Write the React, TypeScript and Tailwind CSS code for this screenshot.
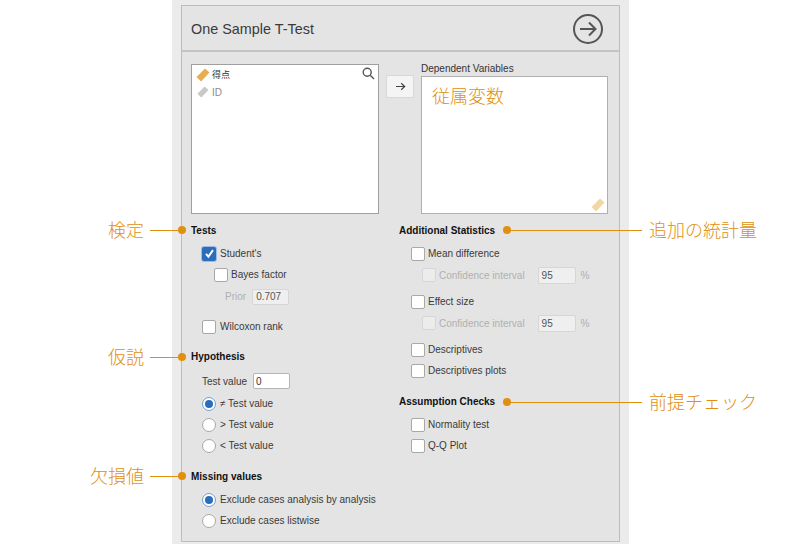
import React from 'react';

const SANS = "font-['Liberation_Sans',sans-serif]";
const CJK = "font-['Noto_Sans_CJK_JP','Liberation_Sans',sans-serif]";

const Box = ({ checked, disabled }: { checked?: boolean; disabled?: boolean }) => {
  if (checked) {
    return (
      <span className="flex h-[14px] w-[14px] shrink-0 items-center justify-center rounded-[2px] bg-[#2b6cbb] shadow-[0_0_0_1px_#9dbde3]">
        <svg width="11" height="11" viewBox="0 0 11 11" fill="none">
          <path d="M2 5.8 L4.4 8.6 L9 2.2" stroke="#fff" strokeWidth="2" />
        </svg>
      </span>
    );
  }
  return (
    <span
      className={
        disabled
          ? 'h-[14px] w-[14px] shrink-0 rounded-[2px] border border-[#d6d6d6] bg-[#ececec]'
          : 'h-[14px] w-[14px] shrink-0 rounded-[2px] border border-[#a8a8a8] bg-white'
      }
    />
  );
};

const Radio = ({ checked }: { checked?: boolean }) =>
  checked ? (
    <span className="flex h-[14px] w-[14px] shrink-0 items-center justify-center rounded-full border border-[#6d9fdc] bg-white">
      <span className="h-[8px] w-[8px] rounded-full bg-[#2b6cbb]" />
    </span>
  ) : (
    <span className="h-[14px] w-[14px] shrink-0 rounded-full border border-[#a8a8a8] bg-white" />
  );

const Row = ({ children, className = '' }: { children: React.ReactNode; className?: string }) => (
  <div className={`flex h-[21px] items-center gap-[3px] text-[10px] text-[#3a3a3a] ${className}`}>{children}</div>
);

const Heading = ({ children, className = '' }: { children: React.ReactNode; className?: string }) => (
  <div className={`flex h-[16px] items-center text-[10px] font-bold text-[#111] ${className}`}>{children}</div>
);

const ConfidenceRow = () => (
  <Row className="ml-[11px] h-[22px] text-[#b0b0b0]">
    <Box disabled />
    <span>Confidence interval</span>
    <span className="ml-[10px] flex h-[17px] w-[38px] items-center rounded-[2px] border border-[#d6d6d6] bg-[#efefef] pl-[3px] text-[#555]">
      95
    </span>
    <span className="ml-[2px]">%</span>
  </Row>
);

const Tag = ({ color, className = '' }: { color: string; className?: string }) => (
  <svg width="14" height="14" viewBox="0 0 14 14" className={`shrink-0 ${className}`}>
    <path d="M0.5 9 L9 0.5 L13.5 4.5 L5 13.5 Z" fill={color} />
  </svg>
);

const Note = ({ text, dotX, lineX, lineW, y, textX }: { text: string; dotX: number; lineX: number; lineW: number; y: number; textX: number }) => (
  <>
    <span className="absolute h-[8px] w-[8px] rounded-full bg-[#e0900f]" style={{ left: dotX, top: y - 4 }} />
    <span className="absolute h-px bg-[#e0900f]" style={{ left: lineX, top: y, width: lineW }} />
    <span
      className={`absolute whitespace-nowrap text-[18px] font-light leading-[24px] text-[#df9010] ${CJK}`}
      style={{ left: textX, top: y - 13 }}
    >
      {text}
    </span>
  </>
);

export default function App() {
  return (
    <div className={`relative h-[544px] w-[800px] overflow-hidden bg-white ${SANS}`}>
      <div className="ml-[172px] h-[544px] w-[457px] bg-[#ebebeb] pl-[9px] pr-[9px] pt-[5px]">
        <div className="h-[537px] w-[439px] border border-[#bdbdbd] bg-[#e4e4e4]">
          <div className="flex h-[46px] items-center justify-between border-b-2 border-[#c4c4c4] pl-[9px] pr-[15px]">
            <span className="mt-[4px] text-[14.4px] text-[#3a3a3a]">One Sample T-Test</span>
            <svg className="mt-[2px]" width="32" height="32" viewBox="0 0 32 32" fill="none" stroke="#555" strokeWidth="2">
              <circle cx="16" cy="16" r="14" />
              <path d="M8 16 H23 M17 9.5 L23.5 16 L17 22.5" />
            </svg>
          </div>

          <div className="flex pl-[9px] pt-[11px]">
            <div className="relative mt-[1px] h-[150px] w-[188px] border border-[#a0a0a0] bg-white">
              <div className="flex h-[17px] items-center gap-[2px] pl-[4px] pt-[2px] text-[10px] text-[#333]">
                <Tag color="#e9ad4f" />
                <span className={`${CJK} text-[9px]`}>得点</span>
              </div>
              <div className="flex h-[18px] items-center gap-[2px] pl-[4px] pt-[2px] text-[10px] text-[#8a8a8a]">
                <Tag color="#c8c8c8" className="scale-[0.85]" />
                <span>ID</span>
              </div>
              <svg className="absolute right-[3px] top-[2px]" width="13" height="13" viewBox="0 0 13 13" fill="none" stroke="#555" strokeWidth="1.4">
                <circle cx="5.2" cy="5.2" r="4" />
                <path d="M8.2 8.2 L12 12" />
              </svg>
            </div>
            <div className="ml-[7px] mt-[12px] flex h-[23px] w-[28px] items-center justify-center rounded-[2px] border border-[#d8d8d8] bg-[#f4f4f4]">
              <svg width="11" height="9" viewBox="0 0 11 9" fill="none" stroke="#444" strokeWidth="1.2">
                <path d="M1 4.5 H9.5 M6.2 1.2 L9.7 4.5 L6.2 7.8" />
              </svg>
            </div>
            <div className="ml-[7px] w-[187px]">
              <div className="-mt-[2px] flex h-[14px] items-center text-[10px] text-[#333]">Dependent Variables</div>
              <div className="relative mt-[1px] h-[138px] border border-[#b0b0b0] bg-white">
                <div className={`pl-[10px] pt-[6px] text-[18px] font-light leading-[24px] text-[#df9010] ${CJK}`}>従属変数</div>
                <Tag color="#f1d6a8" className="absolute bottom-[1px] right-[2px]" />
              </div>
            </div>
          </div>

          <div className="mt-[8px] flex pl-[9px]">
            <div className="w-[208px]">
              <Heading>Tests</Heading>
              <div className="mt-[5px] pl-[11px]">
                <Row><Box checked /><span className="ml-[1px]">Student's</span></Row>
                <Row className="ml-[12px]"><Box /><span>Bayes factor</span></Row>
                <Row className="ml-[23px] h-[23px] text-[#b0b0b0]">
                  Prior
                  <span className="ml-[3px] flex h-[16px] w-[37px] items-center rounded-[2px] border border-[#d6d6d6] bg-[#efefef] pl-[3px] text-[#555]">
                    0.707
                  </span>
                </Row>
                <Row className="mt-[8px]"><Box /><span className="ml-[1px]">Wilcoxon rank</span></Row>
              </div>
              <Heading className="mt-[11px]">Hypothesis</Heading>
              <div className="mt-[5px] pl-[11px]">
                <Row className="h-[24px]">
                  Test value
                  <span className="ml-[3px] flex h-[16px] w-[37px] items-center rounded-[2px] border border-[#b5b5b5] bg-white pl-[2px] text-[#333]">
                    0
                  </span>
                </Row>
                <Row><Radio checked /><span className="ml-[1px]">≠ Test value</span></Row>
                <Row><Radio /><span className="ml-[1px]">&gt; Test value</span></Row>
                <Row><Radio /><span className="ml-[1px]">&lt; Test value</span></Row>
              </div>
              <Heading className="mt-[12px]">Missing values</Heading>
              <div className="mt-[5px] pl-[11px]">
                <Row><Radio checked /><span className="ml-[1px]">Exclude cases analysis by analysis</span></Row>
                <Row><Radio /><span className="ml-[1px]">Exclude cases listwise</span></Row>
              </div>
            </div>

            <div className="w-[210px]">
              <Heading>Additional Statistics</Heading>
              <div className="mt-[5px] pl-[12px]">
                <Row><Box /><span>Mean difference</span></Row>
                <ConfidenceRow />
                <Row className="mt-[5px]"><Box /><span>Effect size</span></Row>
                <ConfidenceRow />
                <Row className="mt-[5px]"><Box /><span>Descriptives</span></Row>
                <Row><Box /><span>Descriptives plots</span></Row>
              </div>
              <Heading className="mt-[12px]">Assumption Checks</Heading>
              <div className="mt-[5px] pl-[12px]">
                <Row><Box /><span>Normality test</span></Row>
                <Row><Box /><span>Q-Q Plot</span></Row>
              </div>
            </div>
          </div>
        </div>
      </div>

      <Note text="検定" dotX={178} lineX={150} lineW={30} y={230} textX={108} />
      <Note text="仮説" dotX={178} lineX={150} lineW={30} y={357} textX={108} />
      <Note text="欠損値" dotX={178} lineX={150} lineW={30} y={476} textX={90} />
      <Note text="追加の統計量" dotX={503} lineX={506} lineW={136} y={230} textX={649} />
      <Note text="前提チェック" dotX={503} lineX={506} lineW={136} y={402} textX={649} />
    </div>
  );
}
